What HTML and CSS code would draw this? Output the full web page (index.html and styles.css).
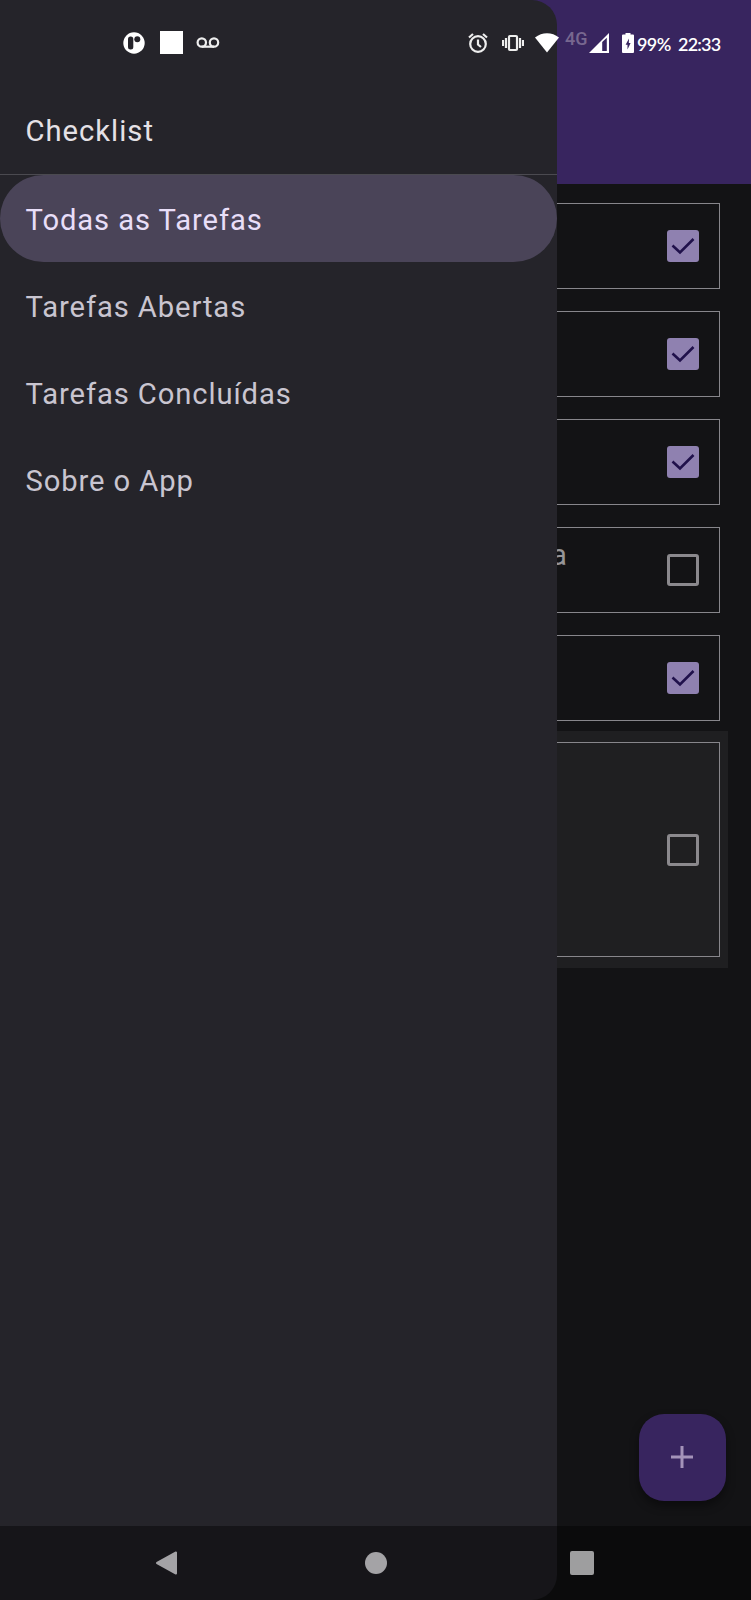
FILE: index.html
```html
<!DOCTYPE html>
<html lang="pt-BR">
<head>
<meta charset="utf-8">
<title>Checklist</title>
<link rel="stylesheet" href="styles.css">
</head>
<body>
<div class="screen">
  <header class="appbar"></header>
  <main class="list">
    <div class="item"><div class="card"><span class="box checked"><svg viewBox="0 0 32 32"><path d="M5.500 15.500l7.500 7L26.500 9"/></svg></span></div></div>
    <div class="item"><div class="card"><span class="box checked"><svg viewBox="0 0 32 32"><path d="M5.500 15.500l7.500 7L26.500 9"/></svg></span></div></div>
    <div class="item"><div class="card"><span class="box checked"><svg viewBox="0 0 32 32"><path d="M5.500 15.500l7.500 7L26.500 9"/></svg></span></div></div>
    <div class="item"><div class="card"><span class="task">a</span><span class="box"></span></div></div>
    <div class="item"><div class="card"><span class="box checked"><svg viewBox="0 0 32 32"><path d="M5.500 15.500l7.500 7L26.500 9"/></svg></span></div></div>
    <div class="item pressed"><div class="card"><span class="box"></span></div></div>
  </main>
  <button class="fab" aria-label="+"><svg viewBox="0 0 22 22"><path d="M11 0v22M0 11h22"/></svg></button>

  <aside class="drawer">
    <div class="title">Checklist</div>
    <nav class="menu">
      <a class="entry active">Todas as Tarefas</a>
      <a class="entry">Tarefas Abertas</a>
      <a class="entry">Tarefas Concluídas</a>
      <a class="entry">Sobre o App</a>
    </nav>
  </aside>

  <div class="status">
    <svg class="s-app" viewBox="0 0 22 22"><circle cx="11" cy="11" r="10.700" fill="#fff"/><rect x="5" y="4.500" width="5.300" height="13" rx="2.500" fill="#25242a"/><circle cx="14.300" cy="7.300" r="3" fill="#25242a"/></svg>
    <span class="s-square"></span>
    <svg class="s-voice" viewBox="0 0 24 12"><g fill="none" stroke="#eee" stroke-width="2.200"><circle cx="5.800" cy="5.500" r="4.200"/><circle cx="18" cy="5.500" r="4.200"/><path d="M5.800 9.700H18"/></g></svg>
    <svg class="s-alarm" viewBox="0 0 20 20"><g fill="none" stroke="#eee" stroke-width="2.200"><circle cx="10" cy="11" r="7.800"/><path d="M10 6.500V11.500l3 2.500M1 4.500L5 1M19 4.500L15 1"/></g></svg>
    <svg class="s-vibrate" viewBox="0 0 22 18"><g fill="none" stroke="#eee" stroke-width="2.200"><rect x="7" y="2" width="8" height="14" rx="1"/><path d="M4 4v10M1 6v6M18 4v10M21 6v6"/></g></svg>
    <svg class="s-wifi" viewBox="0 0 24 20"><path d="M0 4.500C7-1.200 17-1.200 24 4.500L12 19.500z" fill="#fff"/></svg>
    <span class="s-net">4G</span>
    <svg class="s-signal" viewBox="0 0 20 20"><path d="M0 20L20 0V20zM13.200 9V18H17.800V4.700z" fill="#fff" fill-rule="evenodd"/></svg>
    <svg class="s-battery" viewBox="0 0 12 20"><path d="M3.500 0h5v1.500H11Q12 1.500 12 2.500V19Q12 20 11 20H1Q0 20 0 19V2.500Q0 1.500 1 1.500H3.500z" fill="#fff"/><path d="M7 5.500L3.600 11.700H5.500V16.500L8.600 10H6.800z" fill="#38255f"/></svg>
    <span class="s-pct">99%</span>
    <span class="s-time">22:33</span>
  </div>

  <div class="sysnav">
    <svg viewBox="0 0 24 26"><path d="M3 13L22 2.500V23.500z" fill="#a4a3a6" stroke="#a4a3a6" stroke-width="2" stroke-linejoin="round"/></svg>
    <span class="home"></span>
    <span class="recent"></span>
  </div>
</div>
</body>
</html>
```
FILE: styles.css
```css
* { box-sizing: border-box; }
body { margin: 0; background: #131315; font-family: Roboto, sans-serif; }
svg { display: block; flex: none; }
.screen { position: relative; width: 751px; height: 1600px; overflow: hidden; background: #131315; }
.appbar { height: 184px; background: #38255f; }

.list { padding: 8px 23px 0; }
.item { height: 108px; padding: 11px 8px 11px 7px; }
.item.pressed { height: 237px; margin-top: -1px; background: #1f1f21; }
.card {
  display: flex; align-items: center; justify-content: flex-end;
  height: 100%; padding-right: 20px; border: 1.5px solid #87868b;
}
.box { width: 32px; height: 32px; border: 3px solid #8b898d; border-radius: 3px; }
.box.checked { border: 0; background: #8f81b0; }
.box path { fill: none; stroke: #20114b; stroke-width: 2.600; }
.task { align-self: flex-start; margin-right: 100px; padding-top: 10px; color: #969598; font-size: 29.200px; line-height: 35px; }

.fab {
  position: absolute; right: 25px; bottom: 99px; width: 87px; height: 87px;
  display: grid; place-items: center; padding: 0 1px 1px 0; border: 0; border-radius: 25px;
  background: #38255f; box-shadow: 0 5px 10px rgba(0, 0, 0, .4);
}
.fab svg { width: 22px; height: 22px; }
.fab path { stroke: #a493b9; stroke-width: 3; }

.drawer {
  position: absolute; left: 0; top: 0; width: 557px; height: 1600px;
  background: #25242a; border-radius: 0 25px 25px 0;
  font-size: 29.200px; letter-spacing: .91px;
}
.title { height: 175px; padding: 114px 25.500px 0; line-height: 35px; color: #e5e1e6; letter-spacing: 1px; border-bottom: 1px solid #4b4a50; }
.entry { display: flex; align-items: center; height: 87px; padding: 3px 25.500px 0; color: #c9c5d0; letter-spacing: .9px; }
.entry.active { background: #4a4458; color: #e8def8; border-radius: 44px; }

.status { position: absolute; left: 0; top: 0; width: 751px; height: 85px; display: flex; align-items: center; color: #fff; }
.s-app { width: 22px; height: 22px; margin-left: 123px; }
.s-square { width: 23px; height: 23px; margin-left: 15px; background: #fff; }
.s-voice { width: 24px; height: 12px; margin-left: 13px; }
.s-alarm { width: 20px; height: 20px; margin-left: 248px; }
.s-vibrate { width: 22px; height: 18px; margin-left: 14px; }
.s-wifi { width: 24px; height: 20px; margin-left: 11px; }
.s-net { width: 23px; margin: -8px 0 0 6px; font-size: 18px; font-weight: 500; color: #77678f; }
.s-signal { width: 20px; height: 20px; margin-left: 1px; }
.s-battery { width: 12px; height: 20px; margin-left: 13px; }
.s-pct, .s-time { padding-top: 2px; font: 600 18px/22px Lato, sans-serif; white-space: nowrap; }
.s-pct { width: 34px; margin-left: 3px; letter-spacing: -.6px; }
.s-time { margin-left: 7px; letter-spacing: -.8px; }

.sysnav {
  position: absolute; left: 0; bottom: 0; width: 751px; height: 74px;
  display: flex; align-items: center; padding-left: 154px; background: rgba(0, 0, 0, .4);
}
.sysnav svg { width: 24px; height: 26px; }
.home { width: 22px; height: 22px; margin-left: 186.500px; border-radius: 50%; background: #a4a3a6; }
.recent { width: 24px; height: 24px; margin-left: 183.500px; border-radius: 2px; background: #9e9e9f; }
```
